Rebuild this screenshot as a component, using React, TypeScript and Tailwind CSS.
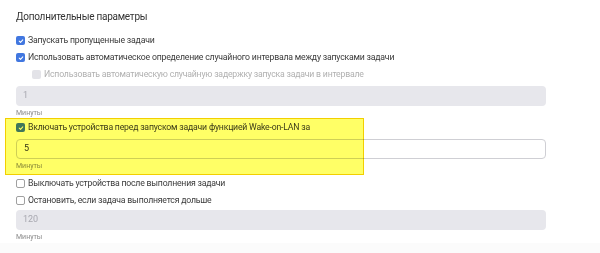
const Check = ({ checked, disabled }: { checked?: boolean; disabled?: boolean }) => {
  if (checked) {
    return (
      <span className="flex h-[9px] w-[9px] shrink-0 items-center justify-center rounded-[2px] bg-[#4177e0]">
        <svg width="6" height="6" viewBox="0 0 10 10" fill="none">
          <path d="M2 5.2 4.2 7.3 8 3" stroke="white" strokeWidth="1.7" strokeLinecap="round" strokeLinejoin="round" />
        </svg>
      </span>
    );
  }
  return (
    <span
      className={
        disabled
          ? "h-[9px] w-[9px] shrink-0 rounded-[2px] bg-[#e3e3e8]"
          : "h-[9px] w-[9px] shrink-0 rounded-[2px] border border-[#a0a0a0] bg-white"
      }
    />
  );
};

const Row = ({ label, checked, disabled, indent }: { label: string; checked?: boolean; disabled?: boolean; indent?: boolean }) => (
  <div className={`flex h-[17px] items-center gap-[3px] ${indent ? "pl-[32px]" : "pl-[16px]"}`}>
    <Check checked={checked} disabled={disabled} />
    <span className={disabled ? "text-[8.7px] tracking-[-0.2px] text-[#b0b0b0]" : "text-[8.7px] tracking-[-0.2px] text-[#3a3a3a]"}>{label}</span>
  </div>
);

const Field = ({ value, active }: { value: string; active?: boolean }) => (
  <div className="pl-[16px] pr-[54px]">
    <div
      className={
        active
          ? "flex h-[20px] items-center rounded-[4px] border border-[#cfcfd4] bg-white px-[7px] text-[9px] text-[#333]"
          : "flex h-[20px] items-center rounded-[4px] bg-[#e7e7ec] px-[7px] text-[9px] text-[#a8a8b0]"
      }
    >
      {value}
    </div>
    <div className="mt-[1px] h-[12px] text-[7px] leading-[12px] text-[#8a8a8a]">Минуты</div>
  </div>
);

export default function App() {
  return (
    <div className="relative h-[253px] w-[600px] overflow-hidden bg-white font-['Roboto',sans-serif]">
      <div className="pt-[9px] pl-[16px] text-[10px] leading-[16px] tracking-[-0.25px] text-[#333]">Дополнительные параметры</div>
      <div className="mt-[7px] flex flex-col">
        <Row checked label="Запускать пропущенные задачи" />
        <Row checked label="Использовать автоматическое определение случайного интервала между запусками задачи" />
        <Row disabled indent label="Использовать автоматическую случайную задержку запуска задачи в интервале" />
        <div className="mt-[3px]">
          <Field value="1" />
        </div>
        <Row checked label="Включать устройства перед запуском задачи функцией Wake-on-LAN за" />
        <div className="mt-[3px]">
          <Field value="5" active />
        </div>
        <div className="mt-[3px]">
          <Row label="Выключать устройства после выполнения задачи" />
        </div>
        <Row label="Остановить, если задача выполняется дольше" />
        <div className="mt-[1px]">
          <Field value="120" />
        </div>
      </div>
      <div className="absolute bottom-0 left-0 h-[10px] w-full bg-[#fbfbfb]" />
      <div className="pointer-events-none absolute left-[5px] top-[118px] h-[57px] w-[359px] border border-[#f2cf00] bg-[#ffff66] mix-blend-multiply" />
    </div>
  );
}
